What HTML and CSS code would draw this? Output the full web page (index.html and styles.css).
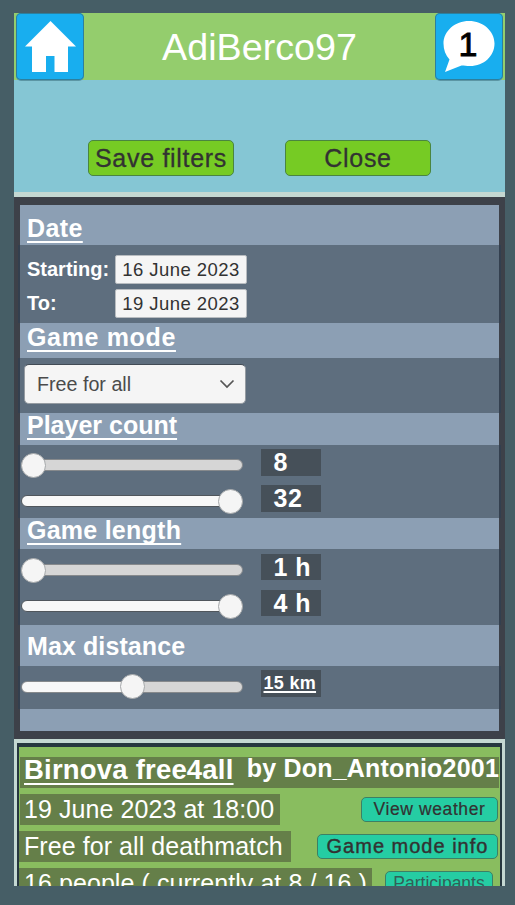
FILE: index.html
```html
<!DOCTYPE html>
<html lang="en">
<head>
<meta charset="utf-8">
<meta name="viewport" content="width=device-width">
<title>Game filters</title>
<link rel="stylesheet" href="styles.css">
</head>
<body>
<main class="app">
  <header class="topbar">
    <button class="tile" aria-label="Home">
      <svg viewBox="0 0 68 67" width="68" height="67"><path fill="#fff" d="M34.5 8 60 33.5H52V59H38.500V43H30V59H16V33.500H9Z"/></svg>
    </button>
    <h1 class="title">AdiBerco97</h1>
    <button class="tile" aria-label="Messages">
      <svg viewBox="0 0 68 67" width="68" height="67"><path fill="#fff" d="M34 8C48 8 59.500 18 59.500 30.500C59.500 43 49 53 35 53C31.500 53 29.500 52.700 26.500 52.500L10 59 14.500 46.500C10.500 42 8.500 37 8.500 30.500C8.500 18 20 8 34 8Z"/></svg>
      <span class="count">1</span>
    </button>
  </header>
  <div class="actions">
    <button class="btn save">Save filters</button>
    <button class="btn">Close</button>
  </div>
  <section class="filters">
    <h2 class="band band-date"><span class="u t-date">Date</span></h2>
    <div class="group dates">
      <label class="label">Starting:</label><span class="date">16 June 2023</span>
      <label class="label to">To:</label><span class="date">19 June 2023</span>
    </div>
    <h2 class="band band-mode"><span class="u t-mode">Game mode</span></h2>
    <div class="group mode">
      <div class="select"><span>Free for all</span>
        <svg viewBox="0 0 16 10" width="16" height="10"><path d="M1.500 1.500 8 8 14.500 1.500" fill="none" stroke="#555" stroke-width="1.700"/></svg>
      </div>
    </div>
    <h2 class="band band-count"><span class="u t-count">Player count</span></h2>
    <div class="group ranges players">
      <div class="slider low"><i class="thumb"></i></div><span class="value">8</span>
      <div class="slider high"><i class="thumb"></i></div><span class="value">32</span>
    </div>
    <h2 class="band band-length"><span class="u t-length">Game length</span></h2>
    <div class="group ranges length">
      <div class="slider low"><i class="thumb"></i></div><span class="value">1 h</span>
      <div class="slider high"><i class="thumb"></i></div><span class="value">4 h</span>
    </div>
    <h2 class="band band-distance"><span class="t-distance">Max distance</span></h2>
    <div class="group ranges distance">
      <div class="slider mid"><i class="thumb"></i></div><span class="value small"><span class="u">15 km</span></span>
    </div>
    <div class="band band-end"></div>
  </section>
  <section class="results">
    <article class="game">
      <div class="game-head"><span class="name u">Birnova free4all</span><span class="host">by Don_Antonio2001</span></div>
      <div class="row"><span class="info when">19 June 2023 at 18:00</span><button class="chip weather">View weather</button></div>
      <div class="row"><span class="info kind">Free for all deathmatch</span><button class="chip rules">Game mode info</button></div>
      <div class="row"><span class="info people">16 people ( currently at 8 / 16 )</span><button class="chip members">Participants</button></div>
    </article>
  </section>
</main>
</body>
</html>
```

FILE: styles.css
```css
* { box-sizing: border-box; }
body {
  margin: 0;
  height: 905px;
  padding: 13px 10px 19px 14px;
  overflow: hidden;
  background: #465e66;
  color: #fff;
  font-family: "Liberation Sans", Arial, sans-serif;
}
button { font-family: inherit; padding: 0; margin: 0; }
h1, h2 { margin: 0; font-weight: 400; }
svg { display: block; }

.app { height: 873px; overflow: hidden; display: flex; flex-direction: column; }
.app > * { flex: none; }

.topbar {
  height: 67px;
  padding: 0 2px;
  display: flex;
  justify-content: space-between;
  background: #94cd6d;
}
.tile {
  position: relative;
  width: 68px;
  height: 67px;
  border: 0;
  border-radius: 5px;
  background: #18aeef;
  box-shadow: inset 0 0 0 1px #2d7f9d, 0 1px 0 #5c96a4;
}
.count {
  position: absolute;
  inset: 0;
  line-height: 62px;
  text-align: center;
  padding-right: 2px;
  font-size: 34px;
  color: #000;
  -webkit-text-stroke: .9px #000;
}
.title { font-size: 37.7px; line-height: 68px; }

.actions {
  height: 117px;
  padding: 60px 74px 0;
  display: flex;
  justify-content: space-between;
  align-items: flex-start;
  background: #85c6d4;
  border-bottom: 5px solid #c4d8d2;
}
.btn {
  width: 146px;
  height: 36px;
  border: 1px solid #4a8540;
  border-radius: 5px;
  background: #76cb24;
  color: #323232;
  font-size: 25px;
  line-height: 34px;
  letter-spacing: .7px;
  -webkit-text-stroke: .3px #323232;
}

.filters {
  height: 542px;
  padding: 8px 6px;
  background: #3d4149;
}
.band {
  padding-left: 7px;
  background: #8c9fb4;
  font-size: 25px;
  font-weight: 700;
}
.u {
  text-decoration: underline;
  text-decoration-thickness: 2px;
  text-underline-offset: 4px;
  text-decoration-skip-ink: none;
}
.band-date { height: 40px; line-height: 33px; padding-top: 7px; }
.band-mode { height: 35px; line-height: 28px; }
.band-count { height: 32px; line-height: 25px; }
.band-length { height: 31px; line-height: 25px; }
.band-distance { height: 41px; line-height: 43px; }
.band-end { height: 22px; }
.t-date { letter-spacing: .4px; }
.t-mode { letter-spacing: .65px; }
.t-count { letter-spacing: 0; }
.t-length { letter-spacing: .25px; }
.t-distance { letter-spacing: .1px; }

.group {
  margin: 0 -2px;
  border: solid #333f4e;
  border-width: 0 2px;
  background: #5e6e7e;
}
.dates {
  height: 78px;
  padding: 10px 0 0 7px;
  display: grid;
  grid-template-columns: 88px 132px;
  grid-auto-rows: 29px;
  row-gap: 5px;
}
.label { font-size: 20px; font-weight: 700; line-height: 28px; }
.date {
  border: 1px solid #b8bcc0;
  border-radius: 2px;
  background: #f5f5f5;
  color: #323232;
  font-size: 18.5px;
  line-height: 27px;
  letter-spacing: .45px;
  text-align: center;
}
.mode { height: 55px; padding: 6px 0 0 4px; }
.select {
  width: 222px;
  height: 40px;
  padding: 0 10px 0 12px;
  display: flex;
  align-items: center;
  justify-content: space-between;
  border: 1px solid #969ca2;
  border-top-color: #424b55;
  border-radius: 5px;
  background: #f5f5f5;
  color: #4b4b4b;
  font-size: 19.7px;
  line-height: 40px;
}
.ranges {
  padding-left: 1px;
  display: grid;
  grid-template-columns: 223px 60px;
  column-gap: 17px;
  align-items: center;
}
.players { height: 73px; padding-top: 4px; grid-template-rows: 27px 27px; row-gap: 9px; align-content: start; }
.length { height: 76px; padding-top: 5px; grid-template-rows: 26px 26px; row-gap: 10px; align-content: start; }
.distance { height: 43px; padding-top: 4px; grid-template-rows: 27px; align-content: start; }
.slider {
  height: 12px;
  width: 222px;
  margin-top: 5px;
  display: flex;
  align-items: center;
  border: 1px solid #86898c;
  border-radius: 6px;
  background: #d6d6d6;
}
.high { justify-content: flex-end; background: #f8f8f8; border-color: #50565c; }
.mid { justify-content: center; background: linear-gradient(90deg, #f8f8f8 50%, #d6d6d6 50%); }
.length .slider, .distance .slider { margin-top: 6px; }
.thumb {
  width: 25px;
  height: 25px;
  flex: none;
  margin: 0 -1px;
  border: 1px solid #a5a8aa;
  border-radius: 50%;
  background: #f5f5f5;
}
.value {
  height: 100%;
  padding-left: 12.5px;
  background: #465059;
  font-size: 25px;
  font-weight: 700;
  line-height: 27px;
  letter-spacing: .5px;
}
.length .value { line-height: 26px; }
.distance .value { padding-left: 2.5px; font-size: 18px; line-height: 26px; letter-spacing: .3px; }
.small .u { text-underline-offset: 2px; }

.results { height: 180px; padding: 4px 3px 0; background: #c4d8d2; }
.game {
  height: 180px;
  padding-top: 10px;
  border: solid #26373f;
  border-width: 4px 2px 0;
  background: #89bd5f;
}
.game-head {
  height: 31px;
  margin: 0 1px;
  padding-left: 4px;
  display: flex;
  white-space: nowrap;
  font-weight: 700;
  background: #657f49;
}
.name { width: 223px; font-size: 27.5px; line-height: 26px; letter-spacing: .2px; }
.host { font-size: 25px; line-height: 22px; letter-spacing: .2px; }
.row {
  height: 31px;
  margin-top: 6px;
  padding-right: 2px;
  display: flex;
  align-items: center;
  justify-content: space-between;
}
.info {
  height: 31px;
  padding-left: 5px;
  background: #657f49;
  font-size: 25px;
  line-height: 30px;
  letter-spacing: .07px;
  white-space: nowrap;
}
.when { width: 260px; margin-left: 1px; padding-left: 4px; }
.kind { width: 272px; }
.people { width: 353px; }
.chip {
  height: 25px;
  border: 1px solid #3d8064;
  border-radius: 5px;
  background: #25cda3;
  color: #323232;
  font-size: 17.5px;
  line-height: 23px;
}
.weather { width: 137px; letter-spacing: .6px; -webkit-text-stroke: .2px #323232; }
.rules { width: 181px; font-size: 20px; letter-spacing: 1px; -webkit-text-stroke: .4px #323232; }
.members { width: 108px; margin-right: 5px; color: #326058; }
```
